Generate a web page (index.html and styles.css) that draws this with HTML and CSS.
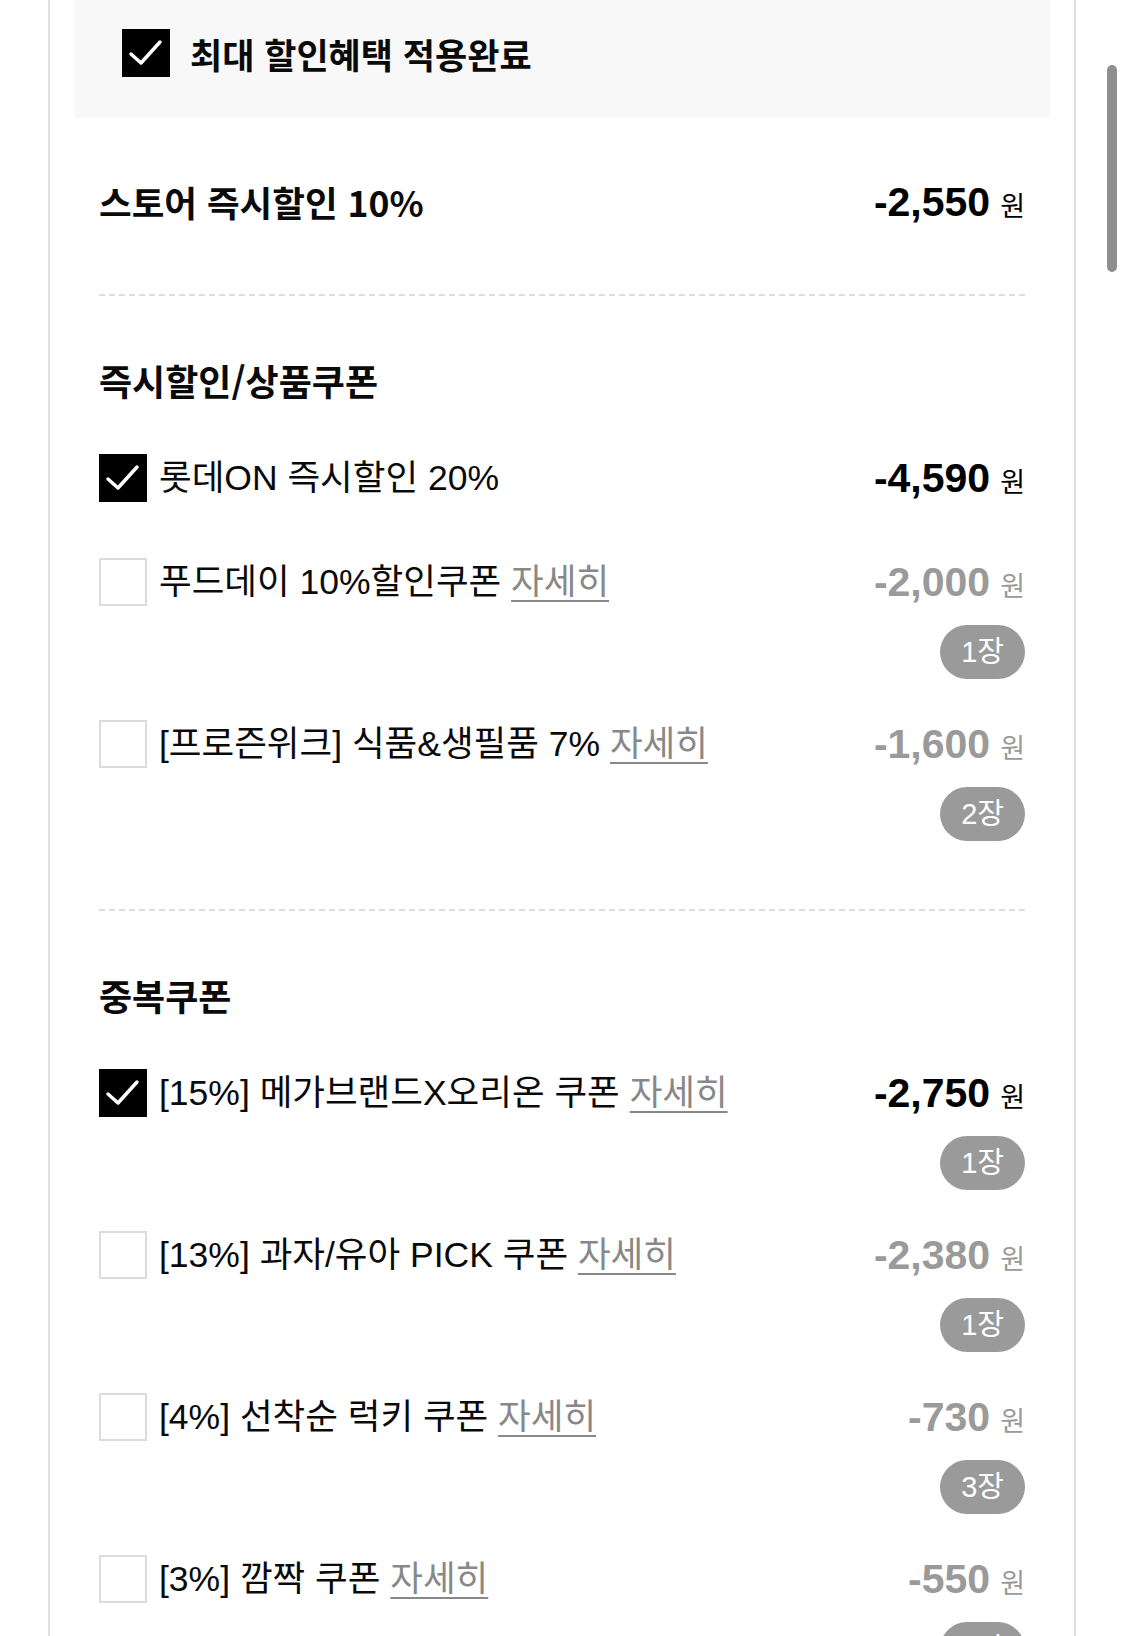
FILE: index.html
```html
<!DOCTYPE html>
<html lang="ko">
<head>
<meta charset="utf-8">
<title>할인혜택</title>
<link rel="stylesheet" href="styles.css">
</head>
<body>
<div class="panel">
  <div class="best">
    <span class="box box--on"><svg viewBox="0 0 48 48"><polyline points="9,25 19,34 38,13"/></svg></span>
    <span class="best__text">최대 할인혜택 적용완료</span>
  </div>

  <div class="store">
    <span class="store__label">스토어 즉시할인 10%</span>
    <span class="amt"><b class="amt__num">-2,550</b><span class="amt__unit">원</span></span>
  </div>

  <div class="section">
    <div class="section__title">즉시할인/상품쿠폰</div>

    <div class="row row--single">
      <div class="row__left">
        <span class="box box--on"><svg viewBox="0 0 48 48"><polyline points="9,25 19,34 38,13"/></svg></span>
        <span class="row__text">롯데ON 즉시할인 20%</span>
      </div>
      <div class="row__right">
        <span class="amt"><b class="amt__num">-4,590</b><span class="amt__unit">원</span></span>
      </div>
    </div>

    <div class="row">
      <div class="row__left">
        <span class="box"></span>
        <span class="row__text">푸드데이 10%할인쿠폰 <a class="more">자세히</a></span>
      </div>
      <div class="row__right">
        <span class="amt amt--off"><b class="amt__num">-2,000</b><span class="amt__unit">원</span></span>
        <span class="badge">1장</span>
      </div>
    </div>

    <div class="row">
      <div class="row__left">
        <span class="box"></span>
        <span class="row__text">[프로즌위크] 식품&amp;생필품 7% <a class="more">자세히</a></span>
      </div>
      <div class="row__right">
        <span class="amt amt--off"><b class="amt__num">-1,600</b><span class="amt__unit">원</span></span>
        <span class="badge">2장</span>
      </div>
    </div>
  </div>

  <div class="section">
    <div class="section__title">중복쿠폰</div>

    <div class="row">
      <div class="row__left">
        <span class="box box--on"><svg viewBox="0 0 48 48"><polyline points="9,25 19,34 38,13"/></svg></span>
        <span class="row__text">[15%] 메가브랜드X오리온 쿠폰 <a class="more">자세히</a></span>
      </div>
      <div class="row__right">
        <span class="amt"><b class="amt__num">-2,750</b><span class="amt__unit">원</span></span>
        <span class="badge">1장</span>
      </div>
    </div>

    <div class="row">
      <div class="row__left">
        <span class="box"></span>
        <span class="row__text">[13%] 과자/유아 PICK 쿠폰 <a class="more">자세히</a></span>
      </div>
      <div class="row__right">
        <span class="amt amt--off"><b class="amt__num">-2,380</b><span class="amt__unit">원</span></span>
        <span class="badge">1장</span>
      </div>
    </div>

    <div class="row">
      <div class="row__left">
        <span class="box"></span>
        <span class="row__text">[4%] 선착순 럭키 쿠폰 <a class="more">자세히</a></span>
      </div>
      <div class="row__right">
        <span class="amt amt--off"><b class="amt__num">-730</b><span class="amt__unit">원</span></span>
        <span class="badge">3장</span>
      </div>
    </div>

    <div class="row">
      <div class="row__left">
        <span class="box"></span>
        <span class="row__text">[3%] 깜짝 쿠폰 <a class="more">자세히</a></span>
      </div>
      <div class="row__right">
        <span class="amt amt--off"><b class="amt__num">-550</b><span class="amt__unit">원</span></span>
        <span class="badge">1장</span>
      </div>
    </div>
  </div>
</div>
<div class="scrollbar"></div>
</body>
</html>
```

FILE: styles.css
```css
html, body {
  margin: 0;
  padding: 0;
  background: #ffffff;
  overflow: hidden;
}

body {
  font-family: "Noto Sans CJK KR", "Noto Sans", sans-serif;
  color: #0a0a0a;
  height: 1636px;
}

.panel {
  box-sizing: border-box;
  width: 1028px;
  margin-left: 48px;
  min-height: 1800px;
  border-left: 2px solid #dedede;
  border-right: 2px solid #dedede;
}

.best {
  box-sizing: border-box;
  display: flex;
  align-items: center;
  height: 118px;
  margin: 0 24px;
  padding: 0 0 12px 48px;
  background: #f8f8f8;
}

.best__text {
  margin-left: 20px;
  font-size: 35px;
  font-weight: 700;
}

.box {
  box-sizing: border-box;
  flex: none;
  display: inline-flex;
  width: 48px;
  height: 48px;
  border: 2px solid #dcdcdc;
  background: #ffffff;
}

.box--on {
  border: none;
  background: #000000;
}

.box svg {
  width: 48px;
  height: 48px;
}

.box svg polyline {
  fill: none;
  stroke: #ffffff;
  stroke-width: 3.5;
  stroke-linecap: round;
  stroke-linejoin: round;
}

.store {
  display: flex;
  justify-content: space-between;
  align-items: center;
  margin: 0 49px;
  padding: 56px 0 64px;
  line-height: 56px;
  border-bottom: 2px dashed #dddddd;
}

.store__label {
  font-size: 35.5px;
  font-weight: 700;
}

.section {
  margin: 0 49px;
  padding: 59px 0 28px;
  border-bottom: 2px dashed #dddddd;
}

.section__title {
  font-size: 36px;
  font-weight: 700;
  line-height: 50px;
  margin-bottom: 48px;
}

.row {
  display: flex;
  justify-content: space-between;
  align-items: flex-start;
  margin-bottom: 40px;
}

.row--single {
  margin-bottom: 54px;
}

.row__left {
  display: flex;
  align-items: center;
  height: 50px;
}

.row__text {
  margin-left: 12px;
  font-family: "Liberation Sans", "Noto Sans CJK KR", sans-serif;
  font-size: 35.5px;
  line-height: 50px;
  white-space: nowrap;
}

.more {
  color: #888888;
  text-decoration: underline;
  text-decoration-thickness: 2px;
  text-underline-offset: 6px;
}

.row__right {
  display: flex;
  flex-direction: column;
  align-items: flex-end;
}

.amt {
  display: inline-flex;
  align-items: baseline;
  height: 50px;
  line-height: 50px;
  color: #000000;
}

.amt__num {
  font-family: "Liberation Sans", "Noto Sans", sans-serif;
  font-size: 41px;
  font-weight: 700;
}

.amt__unit {
  margin-left: 10px;
  font-size: 27px;
  font-weight: 400;
}

.amt--off {
  color: #9a9a9a;
}

.badge {
  box-sizing: border-box;
  margin-top: 18px;
  height: 54px;
  line-height: 54px;
  padding: 0 21px;
  border-radius: 27px;
  background: #9a9a9a;
  color: #ffffff;
  font-family: "Liberation Sans", "Noto Sans CJK KR", sans-serif;
  font-size: 29px;
}

.scrollbar {
  position: fixed;
  left: 1107px;
  top: 65px;
  width: 10px;
  height: 207px;
  border-radius: 5px;
  background: #8f8f8f;
}
```
